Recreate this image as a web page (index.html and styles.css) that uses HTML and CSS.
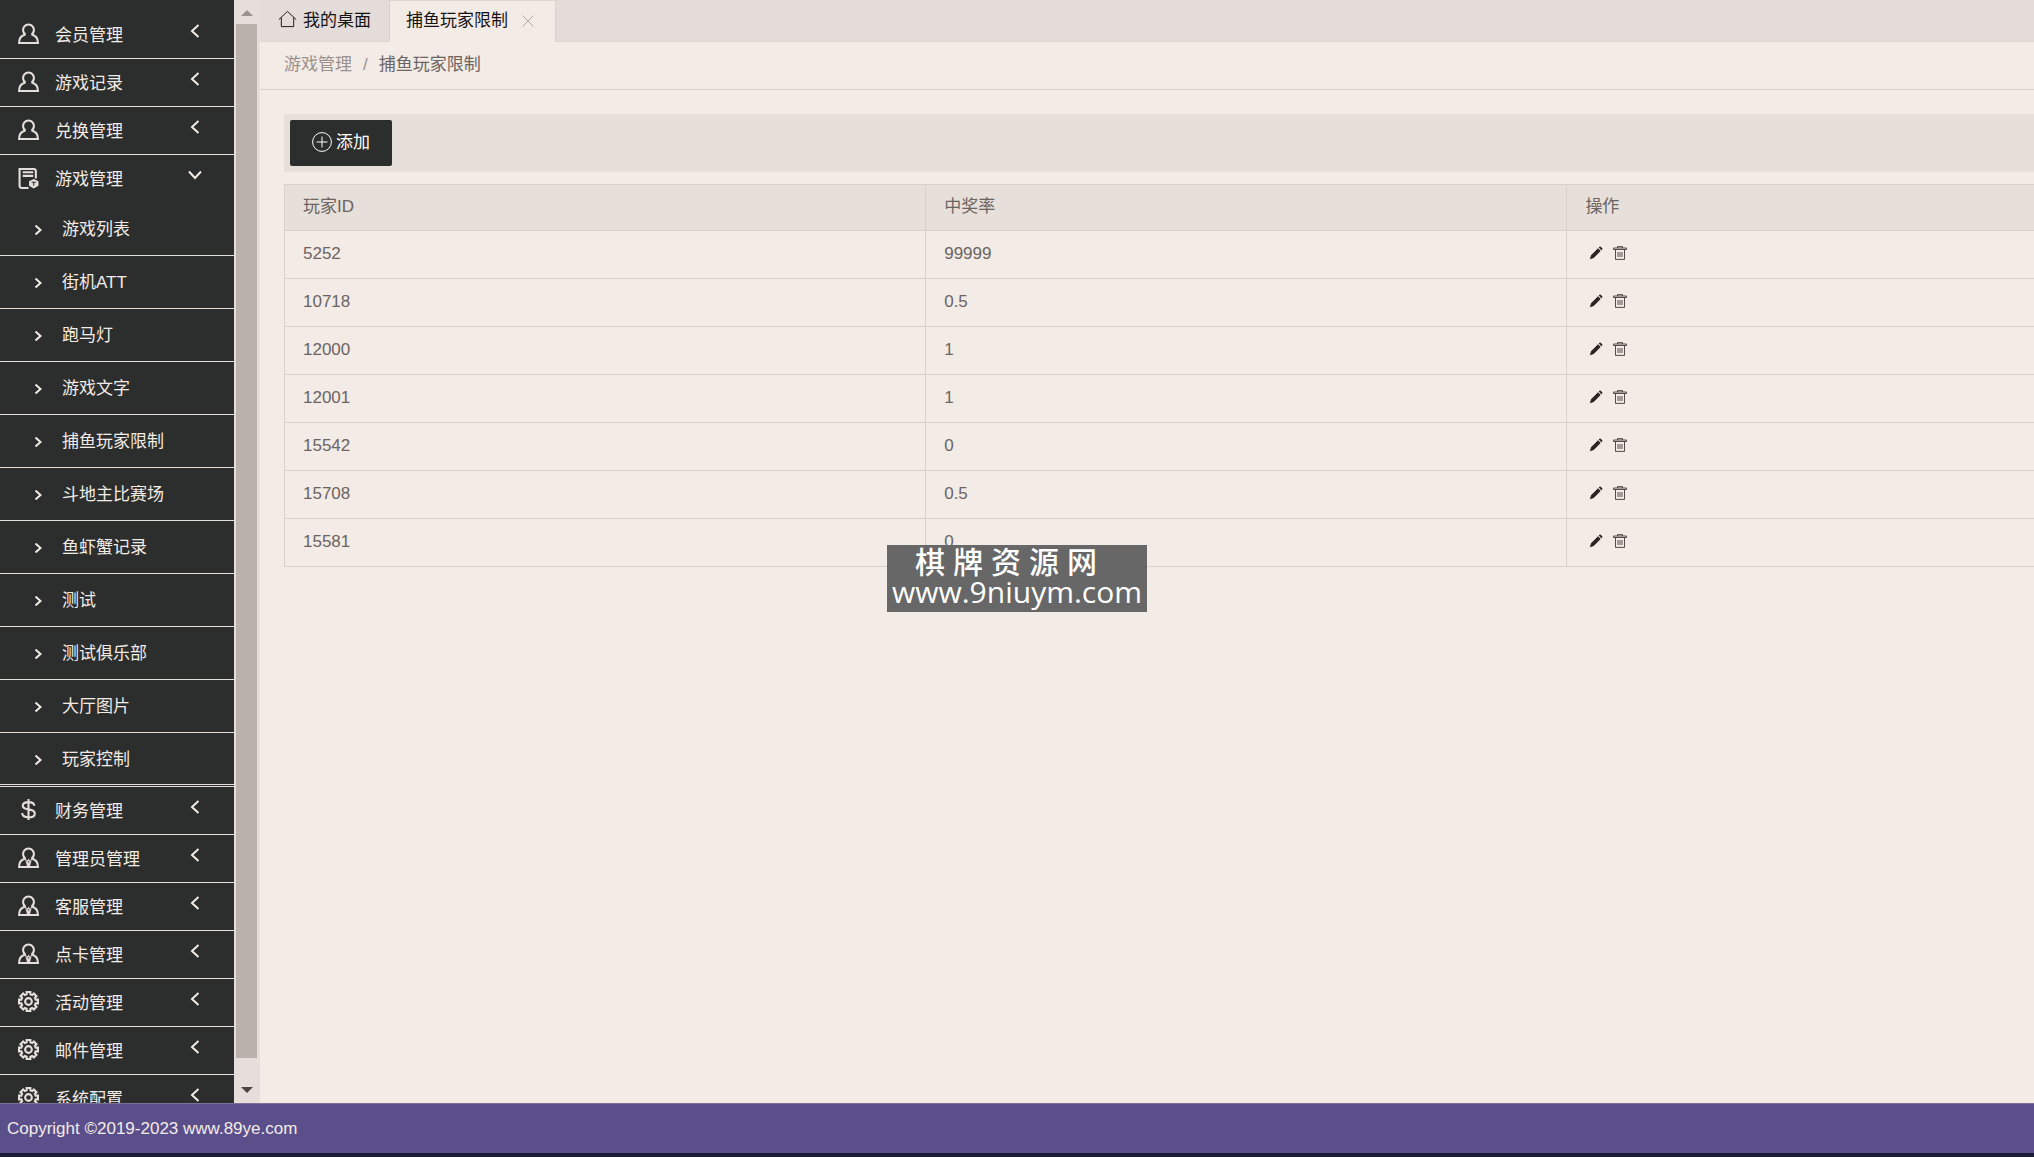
FILE: index.html
```html
<!DOCTYPE html>
<html lang="zh-CN">
<head>
    <meta charset="UTF-8">
    <meta name="viewport" content="width=device-width, initial-scale=1.0">
    <title>捕鱼玩家限制</title>
    <link rel="stylesheet" href="styles.css">
</head>
<body>

    <!-- icons -->
    <svg class="icon-defs" aria-hidden="true">
        <symbol id="i-user" viewBox="0 0 20 20"><path d="M7.2 11a5.2 5.2 0 1 1 5.6 0M7.2 11C3.2 11.800 1 15 1 19h18c0-4-2.200-7.200-6.200-8"/></symbol>
        <symbol id="i-admin" viewBox="0 0 20 20"><path d="M7.200 11a5.200 5.200 0 1 1 5.600 0M7.200 11C3.200 11.800 1 15 1 19h18c0-4-2.200-7.200-6.200-8"/><path class="thin" d="M7.200 11l1.800 7M12.800 11L11 18M10 12l-1 1.500 1 4.500 1-4.500z"/></symbol>
        <symbol id="i-game" viewBox="0 0 20 20"><path d="M10 19H3.500a2 2 0 0 1-2-2V1h13.500a2 2 0 0 1 2 2v7M4.500 4h10M4.500 7.500h10"/><path class="solid" d="M10.500 12.500L15 10.500l4.500 2v4.500L15 19.500l-4.500-2.500z"/><path class="cut" d="M13 13.500h4M15 13.500v3.500"/></symbol>
        <symbol id="i-money" viewBox="0 0 20 20"><path d="M10 0v20M15.500 6.500C15.500 4 13 3 10 3S4.500 4 4.500 6.500 7 9.500 10 9.900s6 1.100 6 3.800-3 3.700-6 3.700-6-1.200-6-4"/></symbol>
        <symbol id="i-gear" viewBox="0 0 20 20"><path d="M8.200 1h3.600v2.200l1.740.72L15.090 2.360 17.640 4.910 16.080 6.460 16.800 8.200H19v3.600h-2.200l-.72 1.740 1.560 1.550-2.550 2.550-1.550-1.560-1.740.72V19H8.200v-2.200l-1.740-.72-1.550 1.560-2.550-2.550 1.560-1.550-.72-1.740H1V8.200h2.200l.72-1.740L2.360 4.910 4.910 2.360 6.460 3.920 8.200 3.200z"/><circle cx="10" cy="10" r="3.200"/></symbol>
        <symbol id="i-left" viewBox="0 0 10 14"><path d="M8.500 1L2 7l6.500 6"/></symbol>
        <symbol id="i-down" viewBox="0 0 14 10"><path d="M1 1.500L7 8l6-6.500"/></symbol>
        <symbol id="i-right" viewBox="0 0 8 10"><path d="M1.500.500L6.500 5l-5 4.500"/></symbol>
        <symbol id="i-home" viewBox="0 0 20 18"><path d="M1 9.500L10 1l9 8.500M3.500 7.500V17h13V7.500"/></symbol>
        <symbol id="i-close" viewBox="0 0 12 12"><path d="M.5.5l11 11M11.500.5l-11 11"/></symbol>
        <symbol id="i-add" viewBox="0 0 20 20"><circle cx="10" cy="10" r="9.400"/><path d="M10 4.500v11M4.500 10h11"/></symbol>
        <symbol id="i-edit" viewBox="0 0 14 14"><path class="solid" d="M.8 13.200l1.200-3.900L9 2.300 11.700 5l-7 7zM9.700 1.600l.8-.8q.7-.5 1.300 0l1.400 1.400q.5.700 0 1.300l-.8.800z"/></symbol>
        <symbol id="i-trash" viewBox="0 0 14 14"><path d="M.5 3.500v-1.500h13v1.500zM4.500 2V.600h5V2M2.500 3.500v9.900h9V3.500M5 6v5M7 6v5M9 6v5"/></symbol>
    </svg>

    <div class="layout">
        <aside class="sidebar">
            <ul class="menu">
                <li><a href="#"><svg class="icon"><use href="#i-user"/></svg>会员管理<svg class="arrow"><use href="#i-left"/></svg></a></li>
                <li><a href="#"><svg class="icon"><use href="#i-user"/></svg>游戏记录<svg class="arrow"><use href="#i-left"/></svg></a></li>
                <li><a href="#"><svg class="icon"><use href="#i-user"/></svg>兑换管理<svg class="arrow"><use href="#i-left"/></svg></a></li>
                <li class="open">
                    <a href="#"><svg class="icon"><use href="#i-game"/></svg>游戏管理<svg class="arrow"><use href="#i-down"/></svg></a>
                    <ul class="sub-menu">
                        <li><a href="#"><svg class="bullet"><use href="#i-right"/></svg>游戏列表</a></li>
                        <li><a href="#"><svg class="bullet"><use href="#i-right"/></svg>街机ATT</a></li>
                        <li><a href="#"><svg class="bullet"><use href="#i-right"/></svg>跑马灯</a></li>
                        <li><a href="#"><svg class="bullet"><use href="#i-right"/></svg>游戏文字</a></li>
                        <li><a href="#"><svg class="bullet"><use href="#i-right"/></svg>捕鱼玩家限制</a></li>
                        <li><a href="#"><svg class="bullet"><use href="#i-right"/></svg>斗地主比赛场</a></li>
                        <li><a href="#"><svg class="bullet"><use href="#i-right"/></svg>鱼虾蟹记录</a></li>
                        <li><a href="#"><svg class="bullet"><use href="#i-right"/></svg>测试</a></li>
                        <li><a href="#"><svg class="bullet"><use href="#i-right"/></svg>测试俱乐部</a></li>
                        <li><a href="#"><svg class="bullet"><use href="#i-right"/></svg>大厅图片</a></li>
                        <li><a href="#"><svg class="bullet"><use href="#i-right"/></svg>玩家控制</a></li>
                    </ul>
                </li>
                <li><a href="#"><svg class="icon"><use href="#i-money"/></svg>财务管理<svg class="arrow"><use href="#i-left"/></svg></a></li>
                <li><a href="#"><svg class="icon"><use href="#i-admin"/></svg>管理员管理<svg class="arrow"><use href="#i-left"/></svg></a></li>
                <li><a href="#"><svg class="icon"><use href="#i-admin"/></svg>客服管理<svg class="arrow"><use href="#i-left"/></svg></a></li>
                <li><a href="#"><svg class="icon"><use href="#i-admin"/></svg>点卡管理<svg class="arrow"><use href="#i-left"/></svg></a></li>
                <li><a href="#"><svg class="icon"><use href="#i-gear"/></svg>活动管理<svg class="arrow"><use href="#i-left"/></svg></a></li>
                <li><a href="#"><svg class="icon"><use href="#i-gear"/></svg>邮件管理<svg class="arrow"><use href="#i-left"/></svg></a></li>
                <li><a href="#"><svg class="icon"><use href="#i-gear"/></svg>系统配置<svg class="arrow"><use href="#i-left"/></svg></a></li>
            </ul>
            <div class="scrollbar">
                <span class="scroll-up"></span>
                <span class="scroll-thumb"></span>
                <span class="scroll-down"></span>
            </div>
        </aside>

        <main class="content">
            <nav class="tabs">
                <a href="#" class="tab"><svg class="icon-home"><use href="#i-home"/></svg>我的桌面</a>
                <div class="tab active"><a href="#">捕鱼玩家限制</a><button type="button" class="tab-close" aria-label="关闭"><svg><use href="#i-close"/></svg></button></div>
            </nav>

            <div class="breadcrumb">
                <a href="#">游戏管理</a><span class="separator">/</span><span class="current">捕鱼玩家限制</span>
            </div>

            <div class="page">
                <div class="toolbar">
                    <button type="button" class="btn-add"><svg><use href="#i-add"/></svg>添加</button>
                </div>

                <table class="players">
                    <thead>
                        <tr><th class="col-id">玩家ID</th><th class="col-rate">中奖率</th><th>操作</th></tr>
                    </thead>
                    <tbody>
                        <tr><td>5252</td><td>99999</td><td><div class="actions"><a href="#" aria-label="编辑"><svg><use href="#i-edit"/></svg></a><a href="#" aria-label="删除"><svg><use href="#i-trash"/></svg></a></div></td></tr>
                        <tr><td>10718</td><td>0.5</td><td><div class="actions"><a href="#" aria-label="编辑"><svg><use href="#i-edit"/></svg></a><a href="#" aria-label="删除"><svg><use href="#i-trash"/></svg></a></div></td></tr>
                        <tr><td>12000</td><td>1</td><td><div class="actions"><a href="#" aria-label="编辑"><svg><use href="#i-edit"/></svg></a><a href="#" aria-label="删除"><svg><use href="#i-trash"/></svg></a></div></td></tr>
                        <tr><td>12001</td><td>1</td><td><div class="actions"><a href="#" aria-label="编辑"><svg><use href="#i-edit"/></svg></a><a href="#" aria-label="删除"><svg><use href="#i-trash"/></svg></a></div></td></tr>
                        <tr><td>15542</td><td>0</td><td><div class="actions"><a href="#" aria-label="编辑"><svg><use href="#i-edit"/></svg></a><a href="#" aria-label="删除"><svg><use href="#i-trash"/></svg></a></div></td></tr>
                        <tr><td>15708</td><td>0.5</td><td><div class="actions"><a href="#" aria-label="编辑"><svg><use href="#i-edit"/></svg></a><a href="#" aria-label="删除"><svg><use href="#i-trash"/></svg></a></div></td></tr>
                        <tr><td>15581</td><td>0</td><td><div class="actions"><a href="#" aria-label="编辑"><svg><use href="#i-edit"/></svg></a><a href="#" aria-label="删除"><svg><use href="#i-trash"/></svg></a></div></td></tr>
                    </tbody>
                </table>
            </div>
        </main>
    </div>

    <footer class="footer">Copyright ©2019-2023 www.89ye.com</footer>

    <div class="watermark">
        <div class="watermark-name"><span>棋</span><span>牌</span><span>资</span><span>源</span><span>网</span></div>
        <div>www.9niuym.com</div>
    </div>

</body>
</html>
```
FILE: styles.css
```css
* {
    box-sizing: border-box;
}

body {
    margin: 0;
    height: 100vh;
    display: flex;
    flex-direction: column;
    overflow: hidden;
    background: #f3ebe6;
    color: #6b6461;
    font-family: "Liberation Sans", "Noto Sans CJK SC", sans-serif;
    font-size: 17px;
    line-height: 24px;
}

a {
    color: inherit;
    text-decoration: none;
}

button {
    font: inherit;
    border: none;
    cursor: pointer;
}

ul {
    list-style: none;
    margin: 0;
    padding: 0;
}

svg {
    fill: none;
    stroke: currentColor;
    flex-shrink: 0;
}

.icon-defs {
    position: absolute;
    width: 0;
    height: 0;
}

.solid {
    fill: currentColor;
    stroke: none;
}

.thin {
    stroke-width: 1;
}

.cut {
    stroke: #2b2e2d;
    stroke-width: 1;
}

.layout {
    flex: 1;
    min-height: 0;
    display: flex;
}

/* sidebar */
.sidebar {
    width: 260px;
    flex-shrink: 0;
    display: flex;
    overflow: hidden;
}

.menu {
    flex: 1;
    padding-top: 11px;
    background: #2b2e2d;
    color: #f3ebe6;
}

.menu li {
    border-bottom: 1px solid #e5dedb;
}

.menu a {
    display: flex;
    align-items: center;
    height: 47px;
    padding: 2px 32px 0 18px;
}

.menu .open > a {
    height: 48px;
}

.menu .sub-menu a {
    height: 52px;
    padding-left: 34px;
}

.menu .sub-menu li:last-child {
    margin-bottom: 1px;
}

.menu .sub-menu li:last-child a {
    height: 51px;
}

.icon {
    width: 21px;
    height: 21px;
    margin: 0 16px 4px 0;
    stroke-width: 2;
    color: #e5dedb;
}

.arrow {
    width: 14px;
    height: 14px;
    margin: 0 0 10px auto;
    stroke-width: 2;
}

.bullet {
    width: 8px;
    height: 10px;
    margin-right: 20px;
    stroke-width: 2;
}

.scrollbar {
    width: 26px;
    display: flex;
    flex-direction: column;
    align-items: center;
    background: #e6dedb;
    padding: 10px 3px 10px 2px;
}

.scroll-up,
.scroll-down {
    border: 6px solid transparent;
}

.scroll-up {
    border-top: none;
    border-bottom-color: #9a928f;
    margin-bottom: 8px;
}

.scroll-thumb {
    flex: 1;
    width: 100%;
    background: #bab1ad;
}

.scroll-down {
    border-bottom: none;
    border-top-color: #4b4644;
    margin-top: 29px;
}

/* content */
.content {
    flex: 1;
    min-width: 0;
    overflow: hidden;
}

.tabs {
    display: flex;
    height: 42px;
    background: #e4dcd9;
    border-bottom: 1px solid #ddd5d1;
    color: #151313;
}

.tab {
    display: flex;
    align-items: center;
    padding: 0 18px;
    border-right: 1px solid #d9d1cd;
}

.tab.active {
    padding: 0 21px 2px 16px;
    margin-bottom: -1px;
    background: #f3ebe6;
    border-top: 1px solid #ddd5d1;
}

.icon-home {
    width: 19px;
    height: 18px;
    margin: 0 6px 3px 0;
}

.tab-close {
    display: flex;
    margin-left: 14px;
    padding: 0;
    background: none;
    color: #b3aaa6;
}

.tab-close svg {
    width: 12px;
    height: 12px;
}

.breadcrumb {
    display: flex;
    align-items: center;
    height: 48px;
    padding: 0 24px 2px;
    border-bottom: 1px solid #d9d1cd;
    color: #9a918d;
}

.separator {
    margin: 0 11px;
}

.current {
    color: #6b6461;
}

.page {
    padding: 24px 0 0 24px;
}

.toolbar {
    padding: 6px;
    margin-bottom: 12px;
    background: #e6dfda;
}

.btn-add {
    display: flex;
    align-items: center;
    height: 46px;
    padding: 0 22px;
    border-radius: 2px;
    background: #2b2e2d;
    color: #fff;
}

.btn-add svg {
    width: 20px;
    height: 20px;
    margin: 0 4px 2px 0;
}

.players {
    width: 100%;
    border-collapse: collapse;
    border-left: 1px solid #d9d1cd;
}

.players th,
.players td {
    height: 48px;
    padding: 0 18px 1px;
    border: 1px solid #d9d1cd;
    border-right: none;
    text-align: left;
    font-weight: normal;
}

.players th {
    height: 46px;
    background: #e6dfda;
}

.col-id,
.col-rate {
    width: 36.65%;
}

.actions {
    display: flex;
    gap: 10px;
    padding: 0 0 2px 4px;
    color: #2b2523;
}

.actions a {
    display: flex;
}

.actions svg {
    width: 14px;
    height: 14px;
    stroke-width: 0.8;
}

/* footer */
.footer {
    height: 54px;
    padding: 13px 7px;
    background: #5b4f8b;
    border-top: 1px solid #7a7199;
    border-bottom: 4px solid #1c1c38;
    color: #f3ebe6;
}

.watermark {
    position: absolute;
    top: 545px;
    left: 50%;
    width: 260px;
    height: 67px;
    margin-left: -130px;
    background: #676767;
    color: #fff;
    font: 30px/30px "Open Sans", "Noto Sans CJK SC", sans-serif;
    text-align: center;
}

.watermark-name {
    display: flex;
    gap: 8px;
    padding: 2px 0 0 28px;
    font-weight: 500;
}
```
